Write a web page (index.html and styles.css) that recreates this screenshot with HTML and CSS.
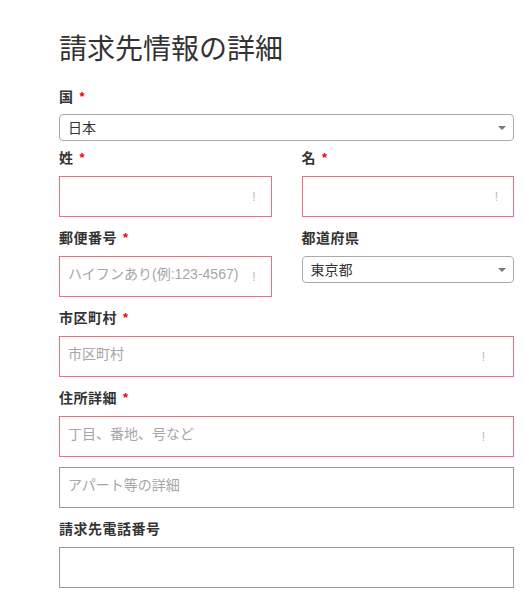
FILE: index.html
```html
<!DOCTYPE html>
<html lang="ja">
<head>
  <meta charset="UTF-8" />
  <meta name="viewport" content="width=device-width, initial-scale=1.0"/>
  <title>請求先情報の詳細</title>
  <link rel="stylesheet" href="styles.css">
</head>
<body>
  <div class="container">
    <h1 class="title">請求先情報の詳細</h1>

    <div class="field field-country">
      <label class="label">国<span class="req">*</span></label>
      <div class="select">
        <select>
          <option>日本</option>
        </select>
      </div>
    </div>

    <div class="row">
      <div class="field">
        <label class="label">姓<span class="req">*</span></label>
        <div class="input-wrap">
          <input type="text" class="input error">
          <span class="warn">!</span>
        </div>
      </div>
      <div class="field">
        <label class="label">名<span class="req">*</span></label>
        <div class="input-wrap">
          <input type="text" class="input error">
          <span class="warn">!</span>
        </div>
      </div>
    </div>

    <div class="row">
      <div class="field">
        <label class="label">郵便番号<span class="req">*</span></label>
        <div class="input-wrap">
          <input type="text" class="input error" placeholder="ハイフンあり(例:123-4567)">
          <span class="warn">!</span>
        </div>
      </div>
      <div class="field">
        <label class="label">都道府県</label>
        <div class="select">
          <select>
            <option>東京都</option>
          </select>
        </div>
      </div>
    </div>

    <div class="field">
      <label class="label">市区町村<span class="req">*</span></label>
      <div class="input-wrap">
        <input type="text" class="input error" placeholder="市区町村">
        <span class="warn warn-wide">!</span>
      </div>
    </div>

    <div class="field">
      <label class="label">住所詳細<span class="req">*</span></label>
      <div class="input-wrap">
        <input type="text" class="input error" placeholder="丁目、番地、号など">
        <span class="warn warn-wide">!</span>
      </div>
      <input type="text" class="input input-extra" placeholder="アパート等の詳細">
    </div>

    <div class="field">
      <label class="label">請求先電話番号</label>
      <input type="text" class="input">
    </div>
  </div>
</body>
</html>
```

FILE: styles.css
```css
body {
  font-family: 'Liberation Sans', 'Noto Sans CJK JP', sans-serif;
  background-color: #fff;
  color: #333;
  margin: 0;
  padding: 0;
}
.container {
  width: 455px;
  padding: 30px 0 0 59px;
}
.title {
  font-size: 28px;
  font-weight: normal;
  line-height: 40px;
  margin: 0 0 18px;
  color: #333;
}
.field {
  margin-bottom: 12px;
}
.field-country {
  margin-bottom: 8px;
}
.field-country .label {
  margin-bottom: 8px;
}
.label {
  display: block;
  height: 18px;
  font-size: 14px;
  font-weight: bold;
  line-height: 18px;
  letter-spacing: 0.5px;
  margin-bottom: 9px;
  color: #333;
  overflow: visible;
}
.req {
  color: #e00;
  font-size: 13px;
  line-height: 18px;
  vertical-align: top;
  margin-left: 6px;
}
.row {
  display: grid;
  grid-template-columns: 1fr 1fr;
  column-gap: 30px;
}
.select {
  position: relative;
}
.select select {
  appearance: none;
  -webkit-appearance: none;
  width: 100%;
  height: 27px;
  padding: 0 24px 0 8px;
  font-family: inherit;
  font-size: 14px;
  color: #333;
  background-color: #fff;
  border: 1px solid #aaa;
  border-radius: 4px;
  box-sizing: border-box;
}
.select::after {
  content: "";
  position: absolute;
  right: 8px;
  top: 12px;
  border-left: 4px solid transparent;
  border-right: 4px solid transparent;
  border-top: 4px solid #777;
}
.input-wrap {
  position: relative;
}
.input {
  display: block;
  width: 100%;
  height: 41px;
  padding: 0 8px 6px;
  font-family: inherit;
  font-size: 14px;
  color: #333;
  background-color: #fff;
  border: 1px solid #999;
  border-radius: 0;
  box-sizing: border-box;
  outline: none;
}
.input::placeholder {
  color: #a6a6a6;
}
.input.error {
  border-color: #f06d82;
}
.input-extra {
  margin-top: 10px;
}
.warn {
  position: absolute;
  right: 16px;
  top: 14px;
  font-size: 12px;
  line-height: 14px;
  color: #bbb;
}
.warn-wide {
  right: 29px;
}
```
